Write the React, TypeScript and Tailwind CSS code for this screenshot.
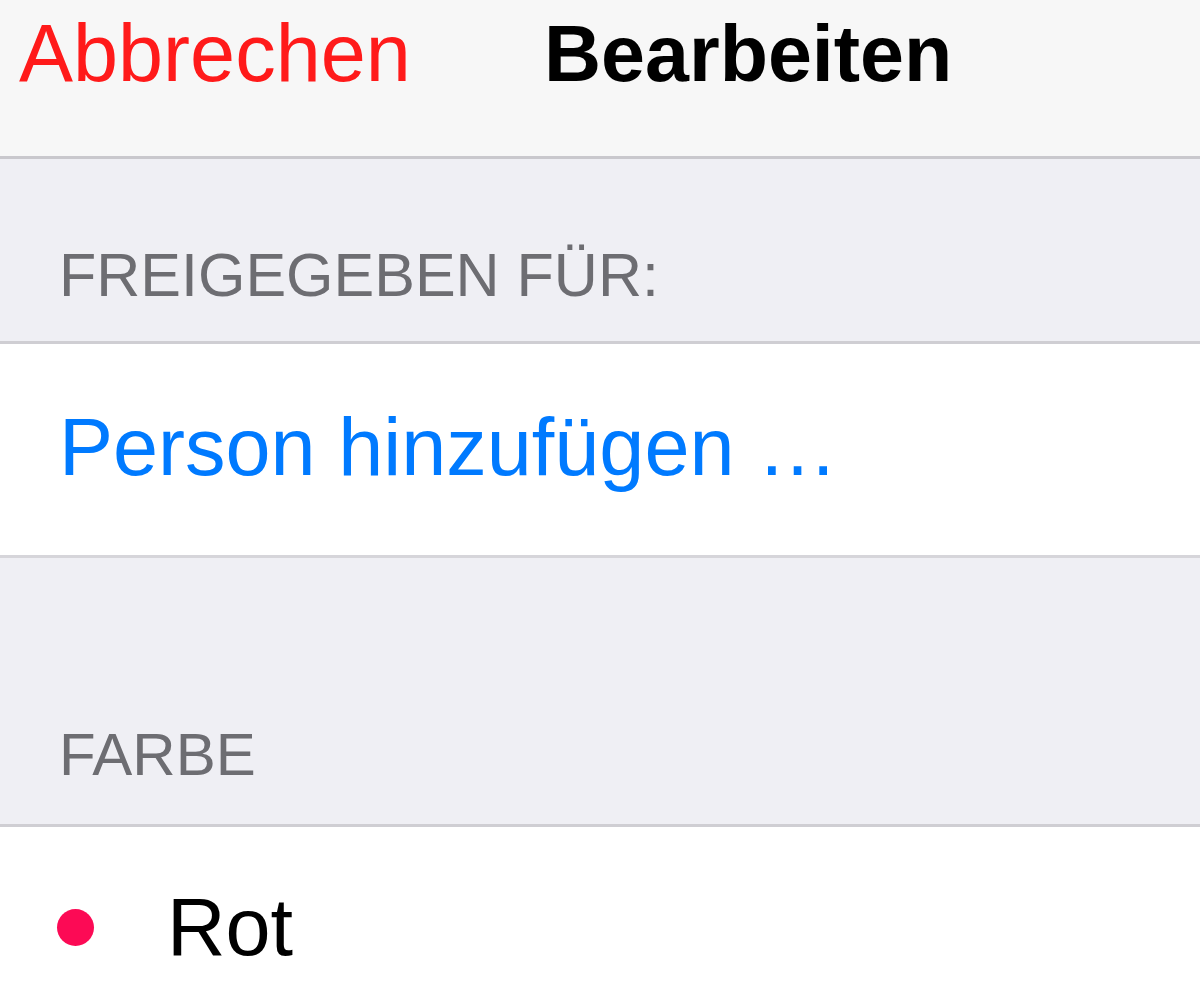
import React from "react";

const font = { fontFamily: '"Liberation Sans", Arial, sans-serif' };

function SectionHeader({ label, className }: { label: string; className: string }) {
  return (
    <div className={`bg-[#efeff4] border-b-[3px] border-[#cfced3] ${className}`}>
      <div className="pl-[59px] leading-none text-[#6d6d72]">{label}</div>
    </div>
  );
}

export default function App() {
  return (
    <div className="w-[1200px] h-[997px] overflow-hidden bg-white" style={font}>
      {/* nav bar */}
      <div className="h-[159px] bg-[#f7f7f7] border-b-[3px] border-[#c9c8cd]">
        <div className="flex items-baseline pl-[19px] pt-[13px]">
          <span className="w-[525px] text-[81px] leading-none text-[#ff1a1a]">Abbrechen</span>
          <span className="text-[79px] leading-none font-bold text-black">Bearbeiten</span>
        </div>
      </div>

      <SectionHeader label="FREIGEGEBEN FÜR:" className="h-[185px] pt-[86px] text-[61px]" />

      {/* add person row */}
      <div className="h-[214px] bg-white border-b-[3px] border-[#d6d5da] pt-[63px]">
        <div className="pl-[59px] text-[81px] leading-none text-[#007aff]">Person hinzufügen …</div>
      </div>

      <SectionHeader label="FARBE" className="h-[269px] pt-[167px] text-[60px]" />

      {/* colour row */}
      <div className="flex items-center pl-[57px] pt-[60px]">
        <span className="w-[37px] h-[37px] rounded-full bg-[#fc0a55]" />
        <span className="ml-[73px] text-[81px] leading-none text-black">Rot</span>
      </div>
    </div>
  );
}
